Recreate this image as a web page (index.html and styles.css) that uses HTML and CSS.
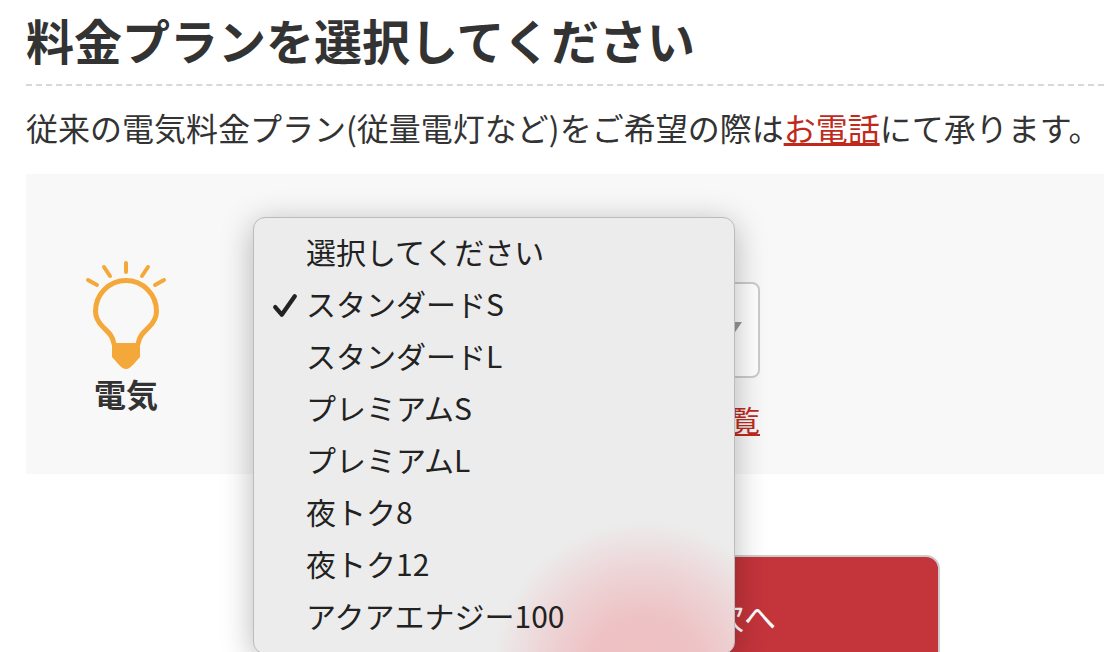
FILE: index.html
```html
<!doctype html>
<html lang="ja">
  <head>
    <meta charset="UTF-8" />
    <title>料金プランを選択してください</title>
    <link rel="stylesheet" href="styles.css">
  </head>
  <body>
    <div class="page">
      <h1>料金プランを選択してください</h1>
      <p class="lead">従来の電気料金プラン(従量電灯など)をご希望の際は<a href="#">お電話</a>にて承ります。</p>

      <div class="plan-panel">
        <div class="plan-type">
          <svg class="bulb" viewBox="0 0 84 112" xmlns="http://www.w3.org/2000/svg">
            <g fill="none" stroke="#f5a83a" stroke-linecap="round">
              <path stroke-width="4" d="M42 3V12M20 7L26 16M4 20L13 25M64 7L58 16M80 20L71 25" />
              <path stroke-width="5" d="M30 84C29 76 24 72 19 67C14 62 11.5 58 11.5 51.5A30.5 31 0 0 1 72.5 51.5C72.5 58 70 62 65 67C60 72 55 76 54 84" />
            </g>
            <path fill="#f5a83a" d="M28 83H56V97C52 101 47 109 42 109C37 109 32 101 28 97Z" />
          </svg>
          <div class="plan-name">電気</div>
        </div>
        <div class="plan-field">
          <div class="select-box"><span class="select-arrow"></span></div>
          <a class="plan-link" href="#">料金プラン一覧</a>
        </div>
      </div>

      <div class="next-row">
        <button class="next-button">次へ</button>
      </div>
    </div>

    <ul class="select-menu">
      <li>選択してください</li>
      <li class="checked">
        <svg class="check" viewBox="0 0 24 24" xmlns="http://www.w3.org/2000/svg">
          <path fill="none" stroke="#222" stroke-width="4" stroke-linecap="round" stroke-linejoin="round" d="M3 13L9 20L21 3" />
        </svg>
        スタンダードS
      </li>
      <li>スタンダードL</li>
      <li>プレミアムS</li>
      <li>プレミアムL</li>
      <li>夜トク8</li>
      <li>夜トク12</li>
      <li>アクアエナジー100</li>
    </ul>
  </body>
</html>
```

FILE: styles.css
```css
* {
  margin: 0;
  padding: 0;
  box-sizing: border-box;
}

html,
body {
  height: 100%;
  overflow: hidden;
}

body {
  font-family: 'Noto Sans CJK JP', 'Noto Sans', sans-serif;
  background: white;
  color: #333;
  position: relative;
}

.page {
  padding-left: 26px;
}

h1 {
  font-size: 48px;
  line-height: 78px;
  height: 86px;
  font-weight: 700;
  color: #333;
  border-bottom: 2px dashed #d8d8d8;
}

.lead {
  font-size: 32px;
  line-height: 44px;
  margin-top: 19px;
  white-space: nowrap;
  color: #333;
}

.lead a,
.plan-link {
  color: #bf2a1c;
}

.plan-panel {
  display: flex;
  height: 300px;
  margin-top: 25px;
  background: #f8f8f8;
}

.plan-type {
  width: 200px;
  display: flex;
  flex-direction: column;
  align-items: center;
  padding-top: 86px;
}

.bulb {
  width: 84px;
  height: 112px;
}

.plan-name {
  font-size: 32px;
  line-height: 42px;
  font-weight: 700;
  color: #333;
}

.plan-field {
  width: 494px;
  margin-left: 40px;
  padding-top: 108px;
  display: flex;
  flex-direction: column;
  align-items: flex-end;
}

.select-box {
  width: 100%;
  height: 96px;
  background: white;
  border: 2px solid #ccc;
  border-radius: 8px;
  display: flex;
  align-items: center;
  justify-content: flex-end;
  padding-right: 16px;
}

.select-arrow {
  width: 0;
  height: 0;
  border-left: 11px solid transparent;
  border-right: 11px solid transparent;
  border-top: 16px solid #999;
}

.plan-link {
  font-size: 29px;
  line-height: 42px;
  margin-top: 20px;
}

.next-row {
  width: 914px;
  margin-top: 81px;
  display: flex;
  justify-content: flex-end;
}

.next-button {
  width: 392px;
  height: 120px;
  background: #c4343b;
  border: 2px solid #ccc;
  border-radius: 14px;
  color: white;
  font-family: inherit;
  font-size: 32px;
  cursor: pointer;
}

.select-menu {
  position: absolute;
  left: 253px;
  top: 217px;
  width: 482px;
  height: 437px;
  padding-top: 8px;
  list-style: none;
  background: radial-gradient(circle 155px at 390px 455px, #eebfc2 0%, #eec3c5 38%, #edd5d7 68%, #ececec 98%), #ececec;
  border: 1px solid #bbb;
  border-radius: 12px;
  box-shadow: 0 6px 32px rgba(0, 0, 0, 0.28);
}

.select-menu li {
  position: relative;
  height: 52px;
  line-height: 50px;
  padding-left: 52px;
  font-size: 30px;
  color: #222;
  white-space: nowrap;
}

.check {
  position: absolute;
  left: 18px;
  top: 15px;
  width: 26px;
  height: 26px;
}
```
